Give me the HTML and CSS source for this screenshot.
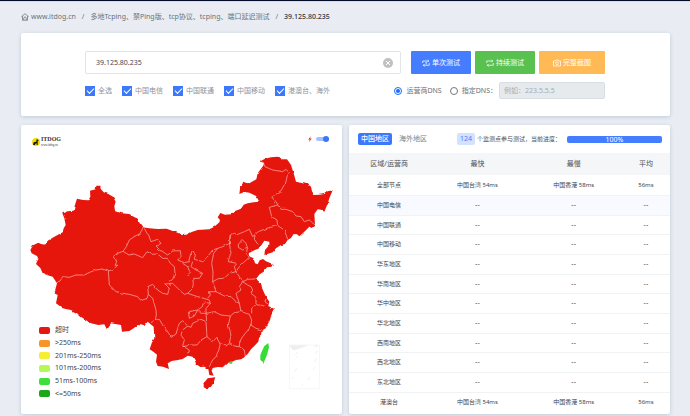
FILE: index.html
```html
<!DOCTYPE html>
<html lang="zh-CN">
<head>
<meta charset="utf-8">
<meta name="viewport" content="width=device-width, initial-scale=1">
<title>Tcping - 39.125.80.235</title>
<link rel="stylesheet" href="styles.css">
</head>
<body>
<main class="page">
  <nav class="crumbs" aria-label="breadcrumb">
    <a class="home" href="#"><svg class="icon" viewBox="0 0 16 16"><path d="M1 7 8 1.500 15 7M3 6v8.500h10V6M5.500 14v-3.500a2.500 2.500 0 0 1 5 0V14"/></svg>www.itdog.cn</a>
    <span>/</span>
    <a href="#">多地Tcping、禁Ping版、tcp协议、tcping、端口延迟测试</a>
    <span>/</span>
    <span class="current">39.125.80.235</span>
  </nav>

  <form class="card search">
    <div class="line">
      <div class="host">
        <input class="host-input" type="text" value="39.125.80.235" aria-label="host">
        <button class="clear" type="button" aria-label="clear"><svg viewBox="0 0 10 10"><circle cx="5" cy="5" r="5"/><path d="m3 3 4 4M7 3 3 7"/></svg></button>
      </div>
      <div class="actions">
        <button class="btn blue" type="button"><svg class="icon" viewBox="0 0 16 16"><path d="M1.500 8V4h12M11 1.500 13.500 4 11 6.500M14.500 8v4.500h-12M5 10l-2.500 2.500L5 15M7 7l1.500-.8V11"/></svg>单次测试</button>
        <button class="btn green" type="button"><svg class="icon" viewBox="0 0 16 16"><path d="M1.500 8V4h12M11 1.500 13.500 4 11 6.500M14.500 8v4.500h-12M5 10l-2.500 2.500L5 15"/></svg>持续测试</button>
        <button class="btn orange" type="button"><svg class="icon" viewBox="0 0 16 16"><path d="M1 4h3.500L6 2h4l1.500 2H15v10H1z"/><circle cx="8" cy="8.500" r="2.800"/></svg>完整截图</button>
      </div>
    </div>
    <div class="line">
      <div class="checks">
        <label><input type="checkbox" checked>全选</label>
        <label><input type="checkbox" checked>中国电信</label>
        <label><input type="checkbox" checked>中国联通</label>
        <label><input type="checkbox" checked>中国移动</label>
        <label><input type="checkbox" checked>港澳台、海外</label>
      </div>
      <div class="dns">
        <label><input type="radio" name="dns" checked>运营商DNS</label>
        <label><input type="radio" name="dns">指定DNS：</label>
        <input class="dns-input" type="text" placeholder="例如：223.5.5.5" aria-label="DNS" disabled>
      </div>
    </div>
  </form>

  <div class="panels">
    <section class="card map">
      <svg class="map-art" viewBox="60 375 963 867" role="img" aria-label="中国地图">
        <defs>
          <filter id="rough" x="0" y="0" width="1" height="1">
            <feTurbulence type="fractalNoise" baseFrequency="0.07" numOctaves="1" seed="4"/>
            <feDisplacementMap in="SourceGraphic" scale="8" xChannelSelector="R" yChannelSelector="G"/>
          </filter>
        </defs>
        <g filter="url(#rough)">
          <path class="land" d="M88 750 96 736 112 728 120 732 132 734 140 722 160 710 185 697 188 685 194 675 190 655 184 640 200 634 218 632 222 614 228 596 246 600 262 601 268 590 267 572 284 568 286 557 298 557 300 568 308 577 322 582 336 590 344 605 340 618 342 632 362 640 385 642 398 650 410 656 416 670 425 682 445 685 470 687 497 686 515 693 530 698 542 705 556 704 572 696 590 690 625 688 640 680 655 667 657 660 650 652 658 639 672 644 690 643 704 632 720 626 728 614 740 610 758 607 775 605 765 588 745 578 730 576 715 582 717 567 727 545 736 549 745 550 766 538 770 520 786 498 790 490 778 484 792 476 810 472 830 470 840 478 858 478 870 495 878 520 885 545 905 550 920 552 930 560 933 574 940 585 956 584 970 582 980 574 995 571 990 583 985 595 981 608 970 635 960 629 950 628 940 642 942 675 932 684 925 680 910 695 905 700 895 709 888 703 878 702 870 714 860 720 852 732 840 735 825 745 815 757 790 765 792 750 805 735 805 725 790 722 775 745 760 751 743 760 747 770 757 774 762 790 770 793 776 781 786 777 795 784 815 792 812 800 798 802 788 815 776 823 765 837 780 850 784 866 790 880 796 892 805 905 802 918 819 926 810 948 807 960 802 970 794 985 782 992 780 1005 774 1015 772 1025 760 1038 750 1048 740 1062 728 1073 720 1078 703 1081 690 1087 679 1089 665 1102 650 1101 635 1104 632 1112 638 1127 625 1125 622 1108 610 1100 598 1101 585 1092 582 1082 575 1070 560 1067 545 1077 530 1080 512 1083 500 1090 504 1107 486 1100 470 1098 465 1085 468 1064 458 1056 446 1048 452 1030 460 1015 458 980 440 965 430 978 410 975 398 985 385 993 363 995 360 975 330 970 317 987 310 973 292 975 270 970 254 960 240 950 226 938 210 930 198 928 185 925 165 910 170 885 160 880 168 850 155 830 140 826 125 820 118 804 105 792 112 776 108 768 92 760Z"/>
          <path class="land" d="M608 1150 620 1135 643 1132 637 1150 630 1160 620 1168 608 1162Z"/>
          <g class="borders">
            <path d="M425 682 418 700 400 710 385 720 376 740 366 754 350 760 335 768 347 785 342 796 350 795 338 808 322 813"/>
            <path d="M168 848 178 842 185 830 205 832 225 825 250 825 268 816 285 810 304 807 322 813 325 855 345 875 365 880 385 883 410 890 420 902 438 895 442 883 440 860 455 853 470 870 485 880 500 883 505 865 492 852 515 850 530 865 550 883 560 880 590 890 625 900 628 910 615 925 615 940"/>
            <path d="M366 754 384 765 400 762 425 773 438 755 452 763 470 762 485 775 500 775 508 790 520 800 522 820 515 838 505 845 508 858"/>
            <path d="M430 685 438 700 443 705 450 725 470 718 480 730 465 738 475 748 490 758 500 765 515 753 538 752 540 770 530 780 550 788 563 785 568 765 575 750 583 765 580 778 605 785 618 772 635 750 665 740 690 728"/>
            <path d="M442 883 455 895 465 930 466 945 463 960 450 968M463 960 475 958 485 975 500 995 510 1012 525 1002 530 985 535 970 545 962 560 978 545 990 540 1005 550 1020 545 1038 565 1050 560 1060"/>
            <path d="M545 790 560 800 568 820 560 828M575 785 570 800 585 810 605 820 595 835 575 835 577 850 575 865 560 880"/>
            <path d="M560 978 570 982 575 970 600 958 615 965 618 1010 600 1020 588 1035 570 1035 545 1040M618 1010 635 1025 648 1012 658 1035 645 1070 635 1080 625 1100"/>
            <path d="M628 910 608 906 604 920 590 930 562 935 565 955 580 948 590 930 600 940 615 940 617 965M615 940 640 935 660 945 688 948 682 975 690 1005 685 1030 675 1038 658 1030M685 1027 700 1038 715 1040 730 1050 733 1070M715 1040 716 1025 725 1010 745 985 750 972"/>
            <path d="M688 948 700 938 720 935 745 943 752 960 750 975 765 985 782 990M635 845 645 875 670 888 690 890 705 905 715 910 720 935M645 875 625 875 628 885 620 895"/>
            <path d="M635 845 652 836 670 835 685 820 705 815 700 800 708 790 682 785 684 775 690 760 686 735 688 705 700 700 708 704 730 695 745 688 755 710 772 695 800 684 830 677 850 690 860 718M635 845 636 815 632 790 638 760 650 745M762 705 760 718 772 735M688 732 686 718 688 705"/>
            <path d="M712 732 725 720 735 730 740 745 725 750 712 742ZM740 745 736 760 745 772 725 790 715 800 705 815 725 845 740 838 765 837"/>
            <path d="M830 677 828 660 812 650 805 622 830 615 840 628 855 628 875 635 885 648 900 650 910 665 925 660 942 675M785 485 792 500 815 510 845 515 855 508 865 518 858 530 855 545 840 572 812 592 825 605 830 615"/>
            <path d="M725 845 715 860 720 870 705 880 715 910M725 845 740 855 750 860 755 870 750 880 765 892 765 915 752 925 752 940M765 915 780 915 795 920M802 912 792 906 795 898"/>
          </g>
        </g>
        <path class="taiwan" d="M802 1029 790 1038 783 1053 778 1065 778 1080 786 1086 788 1093 790 1084 798 1065 804 1042Z"/>
        <path class="taiwan" d="M683 1090 687 1084 696 1084 692 1092Z"/>
        <g class="inset">
          <path class="coast" d="M867 1036h55l-28 10-15 5-10-8zM941 1036h10l-6 7z"/>
          <rect x="865" y="1035" width="90" height="130"/>
          <path class="isles" d="m889 1057-6 8m2 8 6-4m-4 34-4 12m-9 16 4 6m24 20 4-6m14-10 6-10m10-20 6-10m-1-14 5-12m-1-14 4-8"/>
        </g>
      </svg>
      <div class="brand">
        <svg class="brand-mark" viewBox="0 0 24 24"><circle cx="12" cy="12" r="12"/><path d="M3 20 5 13l5-1 4-3-1-4 2-2 2 2 3 1-1 2-2 1v12h-3v-5l-4 1-1 5z"/></svg>
        <div><b>ITDOG</b><small>www.itdog.cn</small></div>
      </div>
      <label class="live"><svg viewBox="0 0 8 14"><path d="M6 0 0 8h3L2 14l6-8H4z"/></svg><input type="checkbox" checked aria-label="自动"></label>
      <ul class="legend">
        <li><i class="c1"></i>超时</li>
        <li><i class="c2"></i>&gt;250ms</li>
        <li><i class="c3"></i>201ms-250ms</li>
        <li><i class="c4"></i>101ms-200ms</li>
        <li><i class="c5"></i>51ms-100ms</li>
        <li><i class="c6"></i>&lt;=50ms</li>
      </ul>
    </section>

    <section class="card results">
      <header class="bar">
        <button class="tab active" type="button">中国地区</button>
        <button class="tab" type="button">海外地区</button>
        <div class="status"><span class="count">124</span><span>个监测点参与测试，当前进度：</span></div>
        <div class="progress" role="progressbar" aria-valuenow="100">100%</div>
      </header>
      <table>
        <thead><tr><th>区域/运营商</th><th>最快</th><th>最慢</th><th>平均</th></tr></thead>
        <tbody>
          <tr><td>全部节点</td><td>中国台湾 54ms</td><td>中国香港 58ms</td><td>56ms</td></tr>
          <tr class="none hover"><td>中国电信</td><td>--</td><td>--</td><td>--</td></tr>
          <tr class="none"><td>中国联通</td><td>--</td><td>--</td><td>--</td></tr>
          <tr class="none"><td>中国移动</td><td>--</td><td>--</td><td>--</td></tr>
          <tr class="none"><td>华东地区</td><td>--</td><td>--</td><td>--</td></tr>
          <tr class="none"><td>华南地区</td><td>--</td><td>--</td><td>--</td></tr>
          <tr class="none"><td>华中地区</td><td>--</td><td>--</td><td>--</td></tr>
          <tr class="none"><td>华北地区</td><td>--</td><td>--</td><td>--</td></tr>
          <tr class="none"><td>西南地区</td><td>--</td><td>--</td><td>--</td></tr>
          <tr class="none"><td>西北地区</td><td>--</td><td>--</td><td>--</td></tr>
          <tr class="none"><td>东北地区</td><td>--</td><td>--</td><td>--</td></tr>
          <tr><td>港澳台</td><td>中国台湾 54ms</td><td>中国香港 58ms</td><td>56ms</td></tr>
        </tbody>
      </table>
    </section>
  </div>
</main>
</body>
</html>
```
FILE: styles.css
```css
* { box-sizing: border-box; }

body {
  margin: 0;
  background: #e9edf3;
  border-top: 1px solid #030b2b;
  color: #4b5158;
  font: 7px/12px "Noto Sans", "Noto Sans CJK SC", sans-serif;
}

button, input { font: inherit; color: inherit; margin: 0; }
button { border: 0; padding: 0; background: none; }
a { color: inherit; text-decoration: none; }

.page { padding: 0 20px 2px 21px; border-top: 1px solid #d9dae9; }

.icon {
  width: 8px;
  height: 8px;
  fill: none;
  stroke: currentColor;
  stroke-width: 1.500;
}

.crumbs {
  display: flex;
  gap: 6px;
  padding: 9px 0 10px;
  color: #68727e;
  white-space: nowrap;
}
.home { display: flex; align-items: center; gap: 2px; }
.current { color: #30363d; font-weight: 500; }

.card {
  background: #fff;
  border-radius: 2px;
  box-shadow: 0 1px 4px #bfc9d6;
}

.search {
  display: grid;
  gap: 8px;
  padding: 18px 65px 17px 64px;
  margin-bottom: 9px;
}
.line { display: flex; justify-content: space-between; align-items: center; }

.host { flex: 1; display: flex; align-items: center; border: 1px solid #e1e4e8; border-radius: 2px; }
.host-input { flex: 1; min-width: 0; height: 21px; padding: 0 10px; border: 0; background: none; color: #3f464d; }
.clear { width: 10px; height: 10px; margin-right: 7px; }
.clear svg { display: block; fill: #bfc1c4; stroke: #fff; stroke-width: 1; }
.clear circle { stroke: none; }

.actions { display: flex; gap: 4px; margin-left: 10px; }
.btn {
  display: flex;
  align-items: center;
  justify-content: center;
  gap: 2px;
  width: 60px;
  height: 23px;
  border-radius: 1px;
  color: #fff;
}
.blue { background: #447dff; }
.green { background: #58c150; }
.orange { width: 66px; background: #ffb955; }

.checks { display: flex; gap: 10px; color: #8d949c; }
.checks label, .dns label { display: flex; align-items: center; gap: 3px; }
.checks input {
  appearance: none;
  width: 10px;
  height: 10px;
  display: grid;
  place-items: center;
  background: #3b78fb;
}
.checks input::before {
  content: "";
  width: 6px;
  height: 3px;
  border: solid #fff;
  border-width: 0 0 1px 1px;
  rotate: -45deg;
  margin-bottom: 2px;
}

.dns { display: flex; align-items: center; gap: 8px; color: #68717b; }
.dns label { gap: 4px; }
.dns input[type="radio"] {
  appearance: none;
  width: 8px;
  height: 8px;
  padding: 1px;
  border: 1px solid #777;
  border-radius: 50%;
  background: #fff content-box;
}
.dns input[type="radio"]:checked { border-color: #1769ff; background-color: #1769ff; }
.dns .dns-input {
  width: 106px;
  height: 17px;
  margin-left: -6px;
  padding: 0 4px;
  border: 1px solid #d9dee4;
  border-radius: 2px;
  background: #e7eaed;
}
.dns-input::placeholder { color: #a4abb2; }

.panels { display: grid; grid-template-columns: 1fr 1fr; gap: 7px; }

.map { position: relative; }
.map-art { display: block; width: 100%; }
.land { fill: #e61710; }
.borders { fill: none; stroke: #ffb5b0; stroke-width: 2; }
.taiwan { fill: #39dc36; }
.inset { fill: none; stroke: #f4f4f4; stroke-width: 2; }
.inset .coast { fill: #eee; stroke: none; }
.inset .isles { stroke: #e8e8e8; }

.brand { position: absolute; left: 11px; top: 11px; display: flex; align-items: center; gap: 1px; color: #34312e; }
.brand-mark { width: 8px; height: 8px; fill: #f4dc00; }
.brand-mark path { fill: #17130a; }
.brand b, .brand small { display: block; font-family: "Liberation Serif", serif; }
.brand b { font-size: 6px; line-height: 7px; font-weight: 700; }
.brand small { font-size: 3px; line-height: 4px; }

.live { position: absolute; right: 13px; top: 11px; height: 6px; display: flex; align-items: center; gap: 4px; }
.live svg { width: 4px; height: 6px; fill: #ee2d25; }
.live input {
  appearance: none;
  display: flex;
  align-items: center;
  justify-content: flex-end;
  width: 13px;
  height: 4px;
  border-radius: 2px;
  background: #a5c0fd;
}
.live input::before { content: ""; width: 6px; height: 6px; border-radius: 50%; background: #3b76f8; }

.legend {
  position: absolute;
  left: 18px;
  bottom: 14px;
  display: flex;
  flex-direction: column;
  height: 76px;
  margin: 0;
  padding: 0;
  list-style: none;
  color: #444;
}
.legend li { flex: 1; display: flex; align-items: center; gap: 5px; }
.legend i { width: 11px; height: 7px; border-radius: 2px; }
.c1 { background: #e61710; }
.c2 { background: #f79328; }
.c3 { background: #f6ed35; }
.c4 { background: #b6f957; }
.c5 { background: #3edf3a; }
.c6 { background: #1ba718; }

.bar { display: flex; align-items: center; height: 28px; padding: 0 8px 0 9px; white-space: nowrap; }
.tab { height: 12px; padding: 0 3px; color: #777e87; }
.tab.active { margin-right: 4px; border-radius: 2px; background: #3b78fb; color: #fff; font-weight: 500; }
.status { display: flex; gap: 2px; margin-left: auto; font-size: 6px; }
.count { padding: 0 3px; border-radius: 2px; background: #d5e2ff; color: #4b7ff5; font-size: 7px; }
.progress {
  width: 95px;
  height: 7px;
  margin-left: 6px;
  border-radius: 2px;
  background: #447dff;
  color: #fff;
  line-height: 7px;
  text-align: center;
}

table { width: 100%; table-layout: fixed; border-collapse: collapse; text-align: center; }
th, td { padding: 0; font-weight: 400; }
th { width: 30%; height: 22px; background: #f5f6f7; }
th:first-child { width: 25%; }
th:last-child { width: 15%; }
td { height: 20px; border-bottom: 1px solid #f1f2f4; font-size: 6px; color: #444; }
tr:nth-child(3n) td { height: 19px; }
tr:last-child td { border-bottom: 0; }
.none td + td { font-family: "Liberation Sans", sans-serif; font-size: 7px; }
.hover { background: #f8faff; }
```
